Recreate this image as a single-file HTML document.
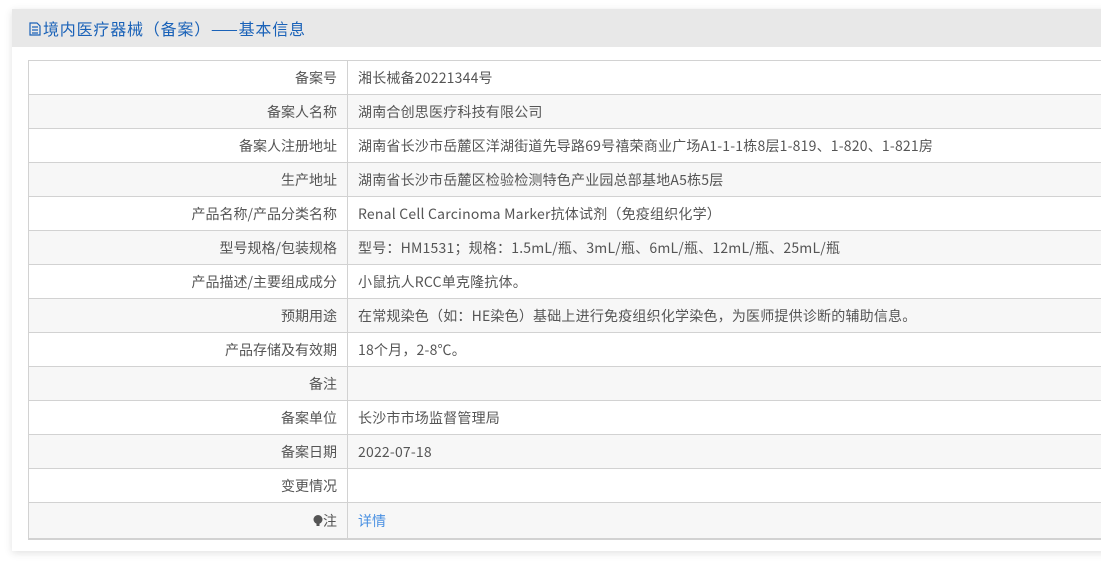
<!DOCTYPE html>
<html><head><meta charset="utf-8"><style>
body{margin:0;background:#fff;font-family:"Noto Sans CJK SC","Liberation Sans",sans-serif;width:1101px;height:571px;overflow:hidden;}
.panel{position:absolute;left:12px;top:9px;width:1100px;height:542px;background:#fff;box-shadow:0 2px 8px rgba(0,0,0,0.12);}
.hd{height:38px;background:#e8e8e8;color:#1a62b8;font-size:16px;line-height:38px;padding-left:17px;letter-spacing:0.8px;}
table{position:absolute;left:16px;top:51px;border-collapse:collapse;width:1090px;font-size:14px;color:#555;}
td{border:1px solid #d2d2d2;height:33px;padding:0 10px;line-height:16px;white-space:nowrap;}
td.c{letter-spacing:0.2px;}
td.l{width:298px;text-align:right;}
tr:nth-child(even){background:#f7f7f7;}
tr:last-child td{height:35px;border-bottom:2px solid #d2d2d2;}
a{color:#4a90e2;text-decoration:none;}
</style></head><body>
<div class="panel">
<div class="hd"><svg width="12" height="14" viewBox="0 0 12 14" style="vertical-align:-1px;margin-right:2px"><path d="M1 1h7l3 3v9H1z M3 5h6M3 8h6M3 11h6" fill="none" stroke="#1a62b8" stroke-width="1.2"/></svg>境内医疗器械（备案）——基本信息</div>
<table>
<tr><td class="l">备案号</td><td class="c">湘长械备20221344号</td></tr>
<tr><td class="l">备案人名称</td><td class="c">湖南合创思医疗科技有限公司</td></tr>
<tr><td class="l">备案人注册地址</td><td class="c">湖南省长沙市岳麓区洋湖街道先导路69号禧荣商业广场A1-1-1栋8层1-819、1-820、1-821房</td></tr>
<tr><td class="l">生产地址</td><td class="c">湖南省长沙市岳麓区检验检测特色产业园总部基地A5栋5层</td></tr>
<tr><td class="l">产品名称/产品分类名称</td><td class="c">Renal Cell Carcinoma Marker抗体试剂（免疫组织化学）</td></tr>
<tr><td class="l">型号规格/包装规格</td><td class="c">型号：HM1531；规格：1.5mL/瓶、3mL/瓶、6mL/瓶、12mL/瓶、25mL/瓶</td></tr>
<tr><td class="l">产品描述/主要组成成分</td><td class="c">小鼠抗人RCC单克隆抗体。</td></tr>
<tr><td class="l">预期用途</td><td class="c">在常规染色（如：HE染色）基础上进行免疫组织化学染色，为医师提供诊断的辅助信息。</td></tr>
<tr><td class="l">产品存储及有效期</td><td class="c">18个月，2-8℃。</td></tr>
<tr><td class="l">备注</td><td></td></tr>
<tr><td class="l">备案单位</td><td class="c">长沙市市场监督管理局</td></tr>
<tr><td class="l">备案日期</td><td class="c">2022-07-18</td></tr>
<tr><td class="l">变更情况</td><td></td></tr>
<tr><td class="l"><svg width="10" height="12" viewBox="0 0 10 12" style="vertical-align:-1px"><ellipse cx="5" cy="4.5" rx="4.5" ry="4.5" fill="#555"/><rect x="3.5" y="8" width="3" height="3" fill="#555"/></svg>注</td><td><a>详情</a></td></tr>
</table>
</div>
</body></html>
